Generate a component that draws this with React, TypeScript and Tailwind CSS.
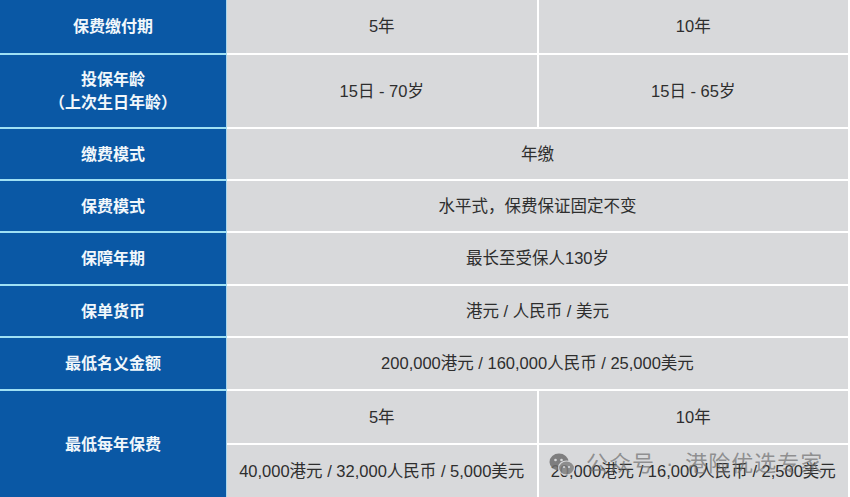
import React from 'react'

const font = "font-['Liberation_Sans','Noto_Sans_CJK_SC',sans-serif]"

type Row = { label: string[]; h: string; cells: string[] }

const rows: Row[] = [
  { label: ['保费缴付期'], h: 'h-[55px]', cells: ['5年', '10年'] },
  { label: ['投保年龄', '（上次生日年龄）'], h: 'h-[74px]', cells: ['15日 - 70岁', '15日 - 65岁'] },
  { label: ['缴费模式'], h: 'h-[52px]', cells: ['年缴'] },
  { label: ['保费模式'], h: 'h-[52px]', cells: ['水平式，保费保证固定不变'] },
  { label: ['保障年期'], h: 'h-[53px]', cells: ['最长至受保人130岁'] },
  { label: ['保单货币'], h: 'h-[52px]', cells: ['港元 / 人民币 / 美元'] },
  { label: ['最低名义金额'], h: 'h-[53px]', cells: ['200,000港元 / 160,000人民币 / 25,000美元'] },
]

function Label({ lines, last }: { lines: string[]; last?: boolean }) {
  return (
    <div
      className={`w-[227px] shrink-0 bg-[#0a58a5] border-r border-[#a9d6ec] flex flex-col items-center justify-center text-[16px] font-bold leading-[23px] text-[#f1f7fb] ${last ? '' : 'border-b-2 border-b-[#9fe0f4]'}`}
    >
      {lines.map((l) => (
        <div key={l}>{l}</div>
      ))}
    </div>
  )
}

function Cell({ text, divider, last }: { text: string; divider?: boolean; last?: boolean }) {
  return (
    <div
      className={`flex-1 bg-[#d8d9db] flex items-center justify-center text-[16.5px] text-[#2e2e2e] ${last ? '' : 'border-b-2 border-white'} ${divider ? 'border-r-2 border-r-white' : ''}`}
    >
      {text}
    </div>
  )
}

function WeChatIcon() {
  return (
    <svg width="26" height="24" viewBox="0 0 26 24">
      <ellipse cx="10" cy="10" rx="9.5" ry="8.5" fill="#6f6f6f" />
      <ellipse cx="17.5" cy="16" rx="8" ry="7" fill="#808080" stroke="#d8d9db" strokeWidth="1.2" />
      <circle cx="6.5" cy="8" r="1.3" fill="#d8d9db" />
      <circle cx="12.5" cy="8" r="1.3" fill="#d8d9db" />
      <circle cx="15" cy="15" r="1.1" fill="#d8d9db" />
      <circle cx="20" cy="15" r="1.1" fill="#d8d9db" />
    </svg>
  )
}

export default function App() {
  return (
    <div className={`w-[850px] h-[497px] bg-white ${font} overflow-hidden`}>
      <div className="relative w-[848px] h-[497px] flex flex-col">
        {rows.map((r) => (
          <div key={r.label.join('')} className={`flex ${r.h}`}>
            <Label lines={r.label} />
            {r.cells.map((c, i) => (
              <Cell key={c} text={c} divider={r.cells.length > 1 && i === 0} />
            ))}
          </div>
        ))}

        {/* 最低每年保费 */}
        <div className="flex flex-1">
          <Label lines={['最低每年保费']} last />
          <div className="flex-1 flex flex-col">
            <div className="flex h-[54px]">
              <Cell text="5年" divider />
              <Cell text="10年" />
            </div>
            <div className="flex flex-1">
              <Cell text="40,000港元 / 32,000人民币 / 5,000美元" divider last />
              <Cell text="20,000港元 / 16,000人民币 / 2,500美元" last />
            </div>
          </div>
        </div>

        {/* watermark */}
        <div className="absolute left-[549px] top-[447px] flex items-center gap-[11px] text-[22px] tracking-[1px] text-[#6e6e6e]/70 pointer-events-none">
          <div className="opacity-85">
            <WeChatIcon />
          </div>
          <span>公众号</span>
          <span>·</span>
          <span>港险优选专家</span>
        </div>
      </div>
    </div>
  )
}
